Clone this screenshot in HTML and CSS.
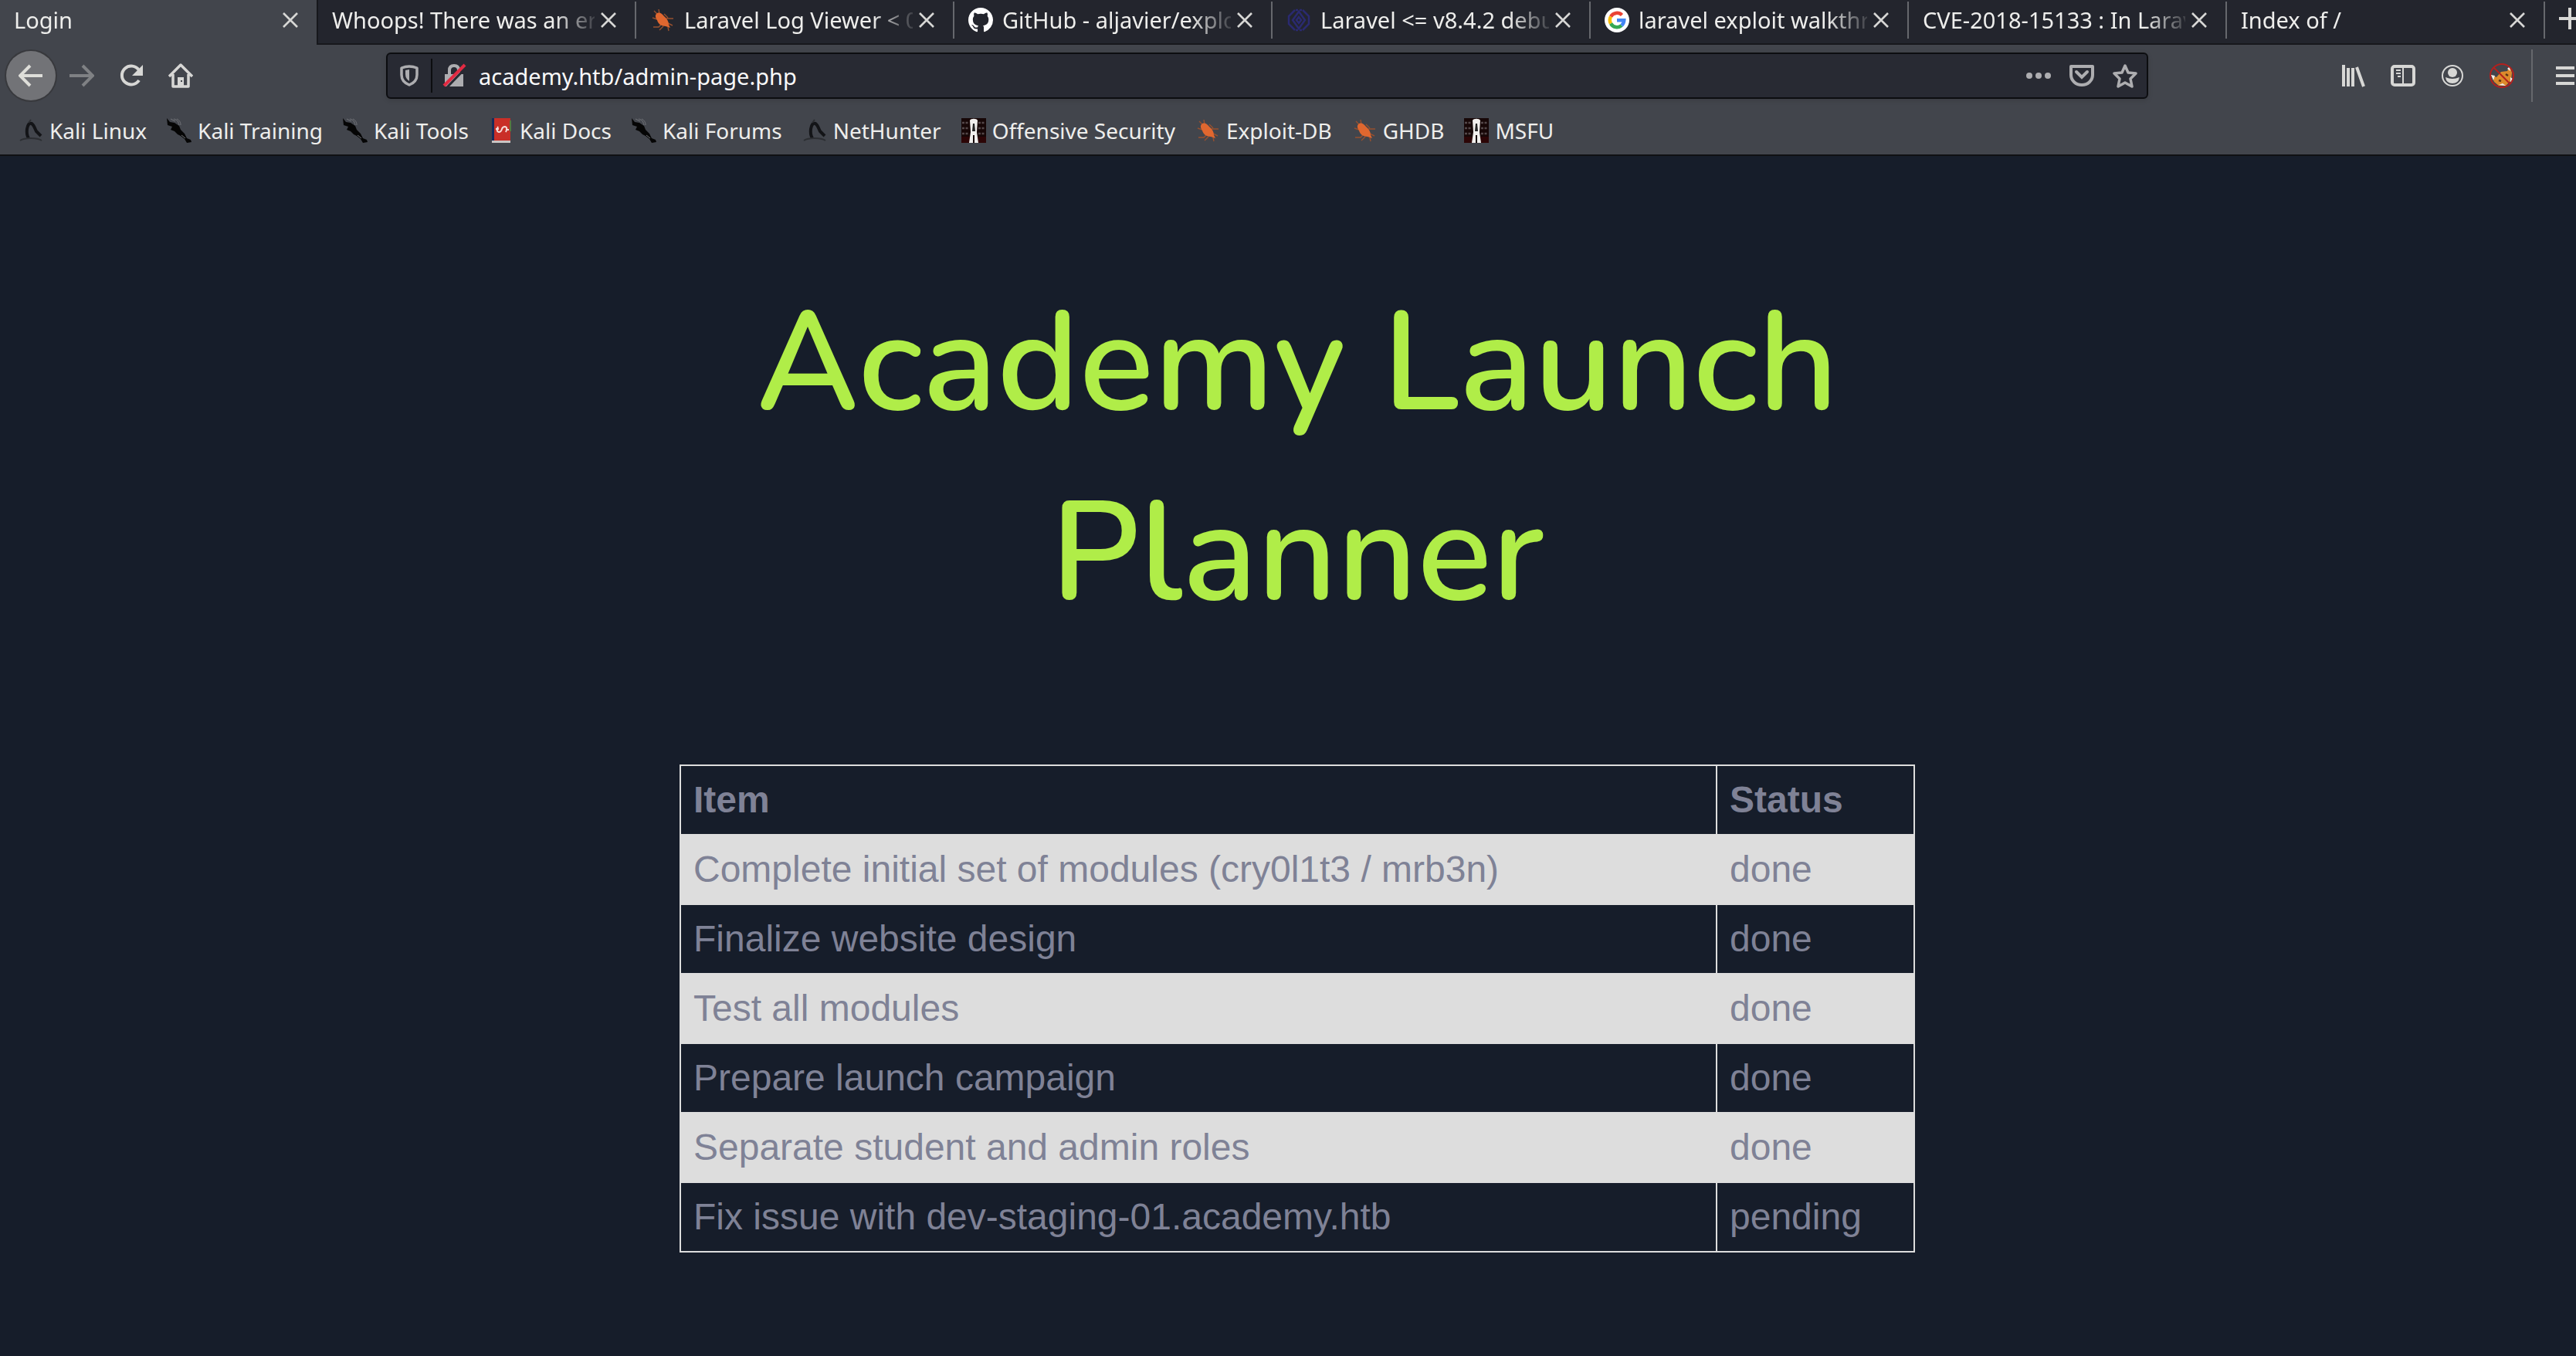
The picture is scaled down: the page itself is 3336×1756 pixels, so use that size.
FILE: index.html
```html
<!DOCTYPE html>
<html lang="en">
<head>
<meta charset="utf-8">
<title>Login</title>
<link rel="stylesheet" href="styles.css">
</head>
<body>
<svg class="defs" aria-hidden="true">
  <symbol id="close" viewBox="0 0 20 20"><path d="M1 1 19 19M19 1 1 19" fill="none" stroke="#d7d7d5" stroke-width="2.6"/></symbol>
  <symbol id="bug" viewBox="0 0 32 32">
    <path d="M5 4l5 5M11 2l1 6M3 13l6 2M4 25h7l4-4M12 29l5-5M18 8l5 5M21 14h9M23 20l6 3M23 25l1 5" fill="none" stroke="#96502f" stroke-width="1.4"/>
    <path d="M8 8c3-3 7-1 10 3 4 3 6 7 6 11l2 4-6-2c-5 0-10-3-11-8-2-3-3-6-1-8z" fill="#e0672f"/>
  </symbol>
  <symbol id="penguin" viewBox="0 0 32 32">
    <path d="M13 26q-3-5-2-12c1-6 3-8 6-7 3 2 4 6 6 10l6 6" fill="none" stroke="#131417" stroke-width="4"/>
    <path d="M13 6l3-4M2 29c6-4 22-4 28 0" fill="none" stroke="#2c2e32" stroke-width="2"/>
  </symbol>
  <symbol id="dragon" viewBox="0 0 32 32">
    <path d="M0 0l4 5 6 1 6 4 2 5 5 5 3 6 5 2 1 3-6 1-3-5-5-4-4-2-4-4-5-2 2-4-6-2z" fill="#050505"/>
    <path d="M5 1l6 3M9 1c5 1 6 4 7 8M13 1c4 2 5 5 5 8M19 22l5 4" fill="none" stroke="#73757a" stroke-width="1"/>
  </symbol>
  <symbol id="offsec" viewBox="0 0 32 32">
    <path d="M0 0h32v32H0z" fill="#170707"/>
    <path d="M1 6h9M22 6h9M1 13h9M22 13h9M1 20h9M22 20h9" stroke="#54484a" stroke-width="2.5" stroke-dasharray="3 1.500"/>
    <path d="M0 24h11v8H0zM21 24h11v8H21z" fill="#2c0506"/>
    <path d="M11 3c1-3 9-3 10 0l-1 15 2 14h-5V22h-2v10h-5l2-14z" fill="#f1efed"/>
    <path d="M15 7h2l1 10h-4z" fill="#222"/>
  </symbol>
</svg>
<div class="browser">
  <header class="chrome">
    <nav class="tabs" aria-label="Tabs">
      <div class="tab active"><a class="label" href="#">Login</a><button class="x" aria-label="Close tab"><svg><use href="#close"/></svg></button></div>
      <div class="tab"><a class="label" href="#">Whoops! There was an error</a><button class="x" aria-label="Close tab"><svg><use href="#close"/></svg></button></div>
      <div class="tab"><svg class="fav"><use href="#bug"/></svg><a class="label" href="#">Laravel Log Viewer &lt; 0</a><button class="x" aria-label="Close tab"><svg><use href="#close"/></svg></button></div>
      <div class="tab"><svg class="fav" viewBox="0 0 16 16"><path fill="#fff" d="M8 0C3.580 0 0 3.580 0 8c0 3.540 2.290 6.530 5.470 7.590.4.070.55-.17.55-.38v-1.490c-2.010.37-2.530-.49-2.690-.94-.09-.23-.48-.94-.82-1.130-.28-.15-.68-.52-.01-.53.63-.01 1.080.58 1.230.82.72 1.210 1.870.87 2.330.66.070-.52.280-.87.510-1.070-1.780-.2-3.640-.89-3.640-3.950 0-.87.310-1.590.82-2.150-.08-.2-.36-1.020.08-2.120 0 0 .67-.21 2.200.82a7.600 7.600 0 0 1 4 0c1.530-1.040 2.200-.82 2.200-.82.440 1.100.160 1.920.080 2.120.510.560.820 1.270.820 2.150 0 3.070-1.870 3.750-3.650 3.950.290.250.540.730.540 1.480v2.200c0 .21.150.46.550.38A8 8 0 0 0 16 8c0-4.420-3.580-8-8-8z"/></svg><a class="label" href="#">GitHub - aljavier/exploit</a><button class="x" aria-label="Close tab"><svg><use href="#close"/></svg></button></div>
      <div class="tab"><svg class="fav" viewBox="0 0 32 32" fill="none" stroke="#2a2a70" stroke-width="2.500"><path d="M11 3 3 11v10l8 8M21 3l8 8v10l-8 8M16 5l-8 11 8 11 8-11z"/><path d="M16 12l-3 4 3 4 3-4zM12 3h3M17 3h3M12 29h3M17 29h3"/></svg><a class="label" href="#">Laravel &lt;= v8.4.2 debug</a><button class="x" aria-label="Close tab"><svg><use href="#close"/></svg></button></div>
      <div class="tab"><svg class="fav" viewBox="0 0 32 32"><circle cx="16" cy="16" r="16" fill="#fff"/><g fill="none" stroke-width="4.500"><path d="M22.500 9.500A9.300 9.300 0 0 0 8 11.500" stroke="#ea4335"/><path d="M8 11.500a9.300 9.300 0 0 0 0 9" stroke="#fbbc05"/><path d="M8 20.500a9.300 9.300 0 0 0 14 2.500" stroke="#34a853"/><path d="M22 23c2-1.800 3-4 3.200-6.700H16" stroke="#4285f4"/></g></svg><a class="label" href="#">laravel exploit walkthrough</a><button class="x" aria-label="Close tab"><svg><use href="#close"/></svg></button></div>
      <div class="tab"><a class="label" href="#">CVE-2018-15133 : In Laravel</a><button class="x" aria-label="Close tab"><svg><use href="#close"/></svg></button></div>
      <div class="tab"><a class="label" href="#">Index of /</a><button class="x" aria-label="Close tab"><svg><use href="#close"/></svg></button></div>
      <button class="new" aria-label="New tab"><svg viewBox="0 0 28 28"><path d="M14 0v28M0 14h28" stroke="#d7d7d5" stroke-width="4"/></svg></button>
    </nav>

    <div class="toolbar">
      <button class="tool back" aria-label="Back"><svg viewBox="0 0 32 32"><path d="M31 16H3M15 3 2 16l13 13" fill="none" stroke="#deded9" stroke-width="4"/></svg></button>
      <button class="tool" aria-label="Forward"><svg viewBox="0 0 32 32"><path d="M0 16h29M17 3l13 13-13 13" fill="none" stroke="#7f8184" stroke-width="4"/></svg></button>
      <button class="tool" aria-label="Reload"><svg viewBox="0 0 32 32"><path d="M26 9A12 12 0 1 0 26 22" fill="none" stroke="#d7d7d5" stroke-width="4"/><path d="M31 2v14H17z" fill="#d7d7d5"/></svg></button>
      <button class="tool" aria-label="Home"><svg viewBox="0 0 32 32"><path d="M1 17 16 2l15 15M6 14v16h20V14" fill="none" stroke="#d7d7d5" stroke-width="3.500" stroke-linejoin="round"/><path d="M12 30V18h8v12z" fill="#d7d7d5"/><path d="M16 22h2v2h-2z" fill="#42454c"/></svg></button>
      <div class="url">
        <svg viewBox="0 0 32 32"><path d="M6 6q10-4 20 0v9q0 9-10 13Q6 24 6 15z" fill="none" stroke="#adadb0" stroke-width="3.500" stroke-linejoin="round"/><path d="M16 8v15q-5-3-5-9V9z" fill="#adadb0"/></svg>
        <span class="rule"></span>
        <svg viewBox="0 0 32 32"><path d="M10 15V9q0-6 6-6t6 6v6" fill="none" stroke="#adadb0" stroke-width="4"/><path d="M4 14h24v16H4z" fill="#adadb0"/><path d="M32 5 6 32" stroke="#282a33" stroke-width="3"/><path d="M30 2 3 29" stroke="#e22a42" stroke-width="4"/></svg>
        <input type="text" aria-label="Address" value="academy.htb/admin-page.php">
        <button aria-label="Page actions"><svg viewBox="0 0 32 32" fill="#adadb0"><circle cx="4" cy="16" r="4"/><circle cx="16" cy="16" r="4"/><circle cx="28" cy="16" r="4"/></svg></button>
        <button aria-label="Save to Pocket"><svg viewBox="0 0 32 32" fill="none" stroke="#adadb0" stroke-width="4"><path d="M2 4h28v11a14 13 0 0 1-28 0z" stroke-linejoin="round"/><path d="M9 11l7 7 7-7" stroke-linecap="round"/></svg></button>
        <button aria-label="Bookmark this page"><svg viewBox="0 0 32 32"><path d="M16 3l4 9 10 1-7 7 2 10-9-5-9 5 2-10-7-7 10-1z" fill="none" stroke="#adadb0" stroke-width="3.500" stroke-linejoin="round"/></svg></button>
      </div>
      <button class="tool" aria-label="Library"><svg viewBox="0 0 32 32" fill="none" stroke="#d7d7d5" stroke-width="4"><path d="M3 2v28M9 6v24M15 6v24M20 5l9 25"/></svg></button>
      <button class="tool" aria-label="Sidebars"><svg viewBox="0 0 32 32" fill="none" stroke="#d7d7d5"><rect x="2" y="4" width="28" height="24" rx="3" stroke-width="4"/><path d="M16 4v24M7 9h6M7 13h6M9 17h4" stroke-width="2"/></svg></button>
      <button class="tool" aria-label="Account"><svg viewBox="0 0 32 32" fill="#d7d7d5"><circle cx="16" cy="16" r="13" fill="none" stroke="#d7d7d5" stroke-width="2"/><circle cx="16" cy="12" r="6"/><path d="M7 18q9 4 18 0-1 8-9 8t-9-8z"/></svg></button>
      <button class="tool" aria-label="Proxy"><svg viewBox="0 0 32 32"><path d="M6 24l-4-9 7 3 6-7 8-1 3-6 3 8-1 10-7 7H12z" fill="#dc8a2c"/><path d="M2 15l5 1-2 6zM23 7l3-3 1 6zM12 28l5-2 4 3zM27 18l3 2-3 5z" fill="#eee"/><path d="M12 22l3 1M21 14l3 2" stroke="#5b3414" stroke-width="2.500"/><circle cx="16" cy="16" r="15" fill="none" stroke="#b3201e" stroke-width="2"/><path d="M5 5l22 22" stroke="#b3201e" stroke-width="2"/></svg></button>
      <span class="divider"></span>
      <button class="tool menu" aria-label="Menu"><svg viewBox="0 0 32 32"><path d="M4 6h24M4 16h24M4 26h24" stroke="#d7d7d5" stroke-width="4"/></svg></button>
    </div>

    <nav class="bookmarks" aria-label="Bookmarks">
      <a href="#"><svg><use href="#penguin"/></svg>Kali Linux</a>
      <a href="#"><svg><use href="#dragon"/></svg>Kali Training</a>
      <a href="#"><svg><use href="#dragon"/></svg>Kali Tools</a>
      <a href="#"><svg viewBox="0 0 32 32"><path d="M4 0h4v29H4z" fill="#172b5c"/><path d="M7 0h21v29H7z" fill="#c92f28"/><path d="M4 29h24v3H4z" fill="#c9c5c4"/><path d="M28 3v14" stroke="#55793f" stroke-width="2"/><path d="M12 11q-3 6 1 7 3 0 4-4 1-3 4-3 4 1 1 7M9 14h4M22 15h4" fill="none" stroke="#f4dedc" stroke-width="2"/></svg>Kali Docs</a>
      <a href="#"><svg><use href="#dragon"/></svg>Kali Forums</a>
      <a href="#"><svg><use href="#penguin"/></svg>NetHunter</a>
      <a href="#"><svg><use href="#offsec"/></svg>Offensive Security</a>
      <a href="#"><svg><use href="#bug"/></svg>Exploit-DB</a>
      <a href="#"><svg><use href="#bug"/></svg>GHDB</a>
      <a href="#"><svg><use href="#offsec"/></svg>MSFU</a>
    </nav>
  </header>

  <main class="page">
    <h1>Academy Launch Planner</h1>
    <table>
      <thead>
        <tr><th class="item" scope="col">Item</th><th scope="col">Status</th></tr>
      </thead>
      <tbody>
        <tr><td>Complete initial set of modules (cry0l1t3 / mrb3n)</td><td>done</td></tr>
        <tr><td>Finalize website design</td><td>done</td></tr>
        <tr><td>Test all modules</td><td>done</td></tr>
        <tr><td>Prepare launch campaign</td><td>done</td></tr>
        <tr><td>Separate student and admin roles</td><td>done</td></tr>
        <tr><td>Fix issue with dev-staging-01.academy.htb</td><td>pending</td></tr>
      </tbody>
    </table>
  </main>
</div>
</body>
</html>
```
FILE: styles.css
```css
* { box-sizing: border-box; }

html { background: #161d2a; }

body {
  margin: 0;
  overflow-x: hidden;
  background: #161d2a;
  color: #eeeeec;
  font: 29px/40px "Noto Sans", "Open Sans", sans-serif;
}

a { color: inherit; text-decoration: none; }

button {
  display: flex;
  align-items: center;
  justify-content: center;
  flex: none;
  padding: 0;
  border: 0;
  background: none;
}

svg { display: block; flex: none; width: 32px; height: 32px; }

.defs { position: absolute; width: 0; height: 0; }

/* The window runs a little past the right edge of the screen */
.browser { width: calc(100% + 24px); }

.chrome {
  background: #42454c;
  border-bottom: 2px solid #0f1013;
}

/* Tabs */
.tabs {
  display: flex;
  height: 58px;
  overflow: hidden;
  background: #23252d;
  box-shadow: inset 0 -2px #17181c;
}

.tab {
  display: flex;
  align-items: center;
  flex: none;
  gap: 12px;
  width: 412px;
  height: 52px;
  padding: 0 26px 0 18px;
  background: linear-gradient(#66686d, #66686d) right 2px / 2px 48px no-repeat;
}

.tab.active {
  height: 58px;
  padding-right: 24px;
  padding-bottom: 6px;
  background: #42454c;
  border-right: 2px solid #17181c;
}

.label {
  flex: 1;
  min-width: 0;
  overflow: hidden;
  white-space: nowrap;
  -webkit-mask-image: linear-gradient(to left, #0002, #000 52px);
  mask-image: linear-gradient(to left, #0002, #000 52px);
}

.x svg { width: 20px; height: 20px; }

.x { margin-left: -4px; }

.new { width: 64px; height: 48px; }

.new svg { width: 28px; height: 28px; }

/* Navigation toolbar */
.toolbar {
  display: flex;
  align-items: center;
  height: 80px;
  padding: 0 8px;
}

.tool { width: 64px; height: 64px; }

.back {
  margin-right: 2px;
  border-radius: 50%;
  background: #727377;
  box-shadow: 0 0 0 2px #38393d;
}

.url {
  display: flex;
  align-items: center;
  flex: 1;
  height: 60px;
  margin: 0 234px;
  padding: 0 12px;
  background: #282a33;
  border: 2px solid #0c0d10;
  border-radius: 6px;
  box-shadow: 0 2px 6px #0002;
}

.rule {
  width: 2px;
  height: 44px;
  margin: 0 12px;
  background: #0c0d10;
}

.url input {
  flex: 1;
  min-width: 0;
  height: 48px;
  margin-left: 16px;
  padding: 0;
  border: 0;
  outline: 0;
  background: none;
  color: #f9f9fa;
  font: inherit;
}

.url button { width: 32px; margin-left: 24px; }

.divider {
  width: 2px;
  height: 68px;
  margin: 0 10px 0 6px;
  background: #66686d;
}

.menu { margin-right: -2px; }

/* Bookmarks */
.bookmarks {
  display: flex;
  align-items: center;
  gap: 26px;
  height: 62px;
  padding: 0 24px;
  font-size: 28px;
}

.bookmarks a {
  display: flex;
  align-items: center;
  gap: 8px;
  white-space: nowrap;
}

/* Page */
.page {
  width: 1600px;
  max-width: 100%;
  margin: 0 auto;
  padding: 146px 0 130px;
}

h1 {
  margin: 0 0 150px;
  color: #b0ed48;
  font: 600 180px/246px Nunito, "Noto Sans", sans-serif;
  text-align: center;
}

table {
  width: 100%;
  border-collapse: collapse;
  color: #7f8296;
  font: 48px/56px "Liberation Sans", Arial, sans-serif;
}

th, td {
  padding: 16px;
  border: 2px solid #ddd;
  text-align: left;
}

.item { width: 1342px; }

tbody tr:nth-child(odd) { background: #ddd; }
```
